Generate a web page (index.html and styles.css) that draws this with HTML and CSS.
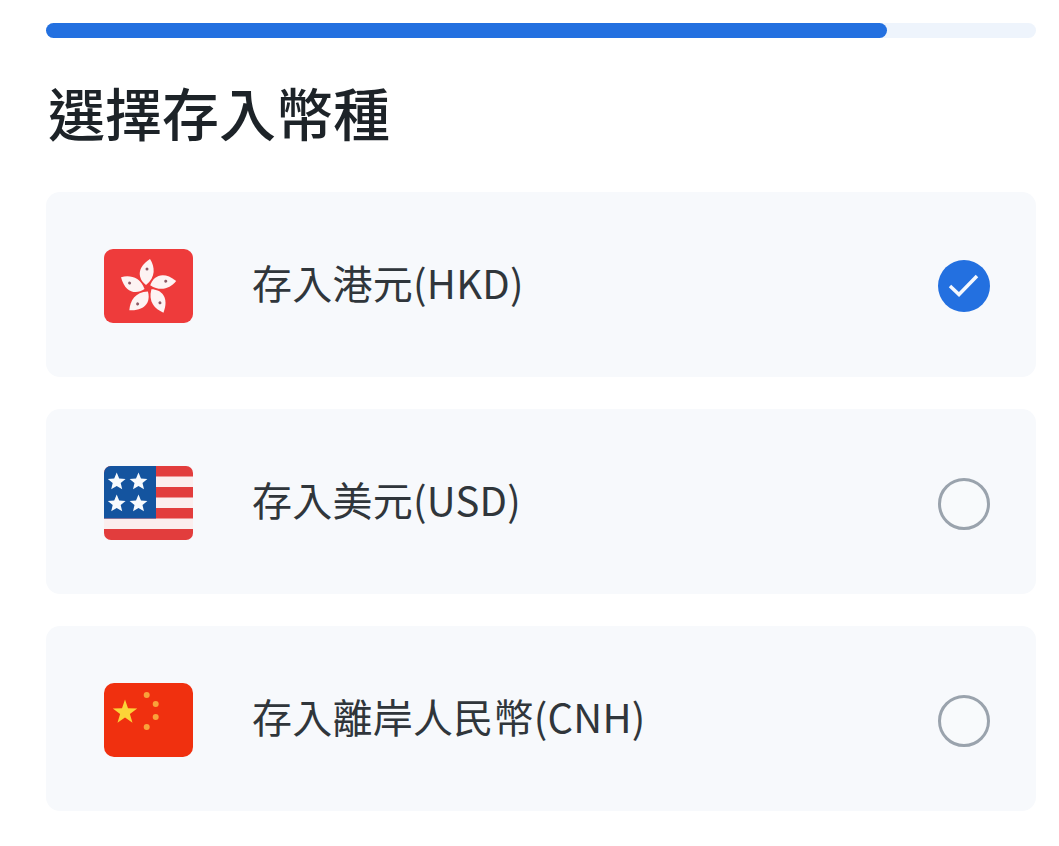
FILE: index.html
```html
<!DOCTYPE html>
<html lang="zh-Hant">
<head>
<meta charset="utf-8">
<title>選擇存入幣種</title>
<link rel="stylesheet" href="styles.css">
</head>
<body>
<main class="page">
  <div class="progress"><div class="progress-fill"></div></div>
  <h1 class="title">選擇存入幣種</h1>
  <div class="list">
    <div class="card">
      <svg class="flag" viewBox="0 0 89 74">
        <rect width="89" height="74" rx="9" fill="#ee3b3b"/>
        <g fill="#fdf3f3">
          <path d="M42 36C34 30 32 19 46 10C51 18 52 28 42 36Z"/>
          <path d="M42 36C34 30 32 19 46 10C51 18 52 28 42 36Z" transform="rotate(72 44 39)"/>
          <path d="M42 36C34 30 32 19 46 10C51 18 52 28 42 36Z" transform="rotate(144 44 39)"/>
          <path d="M42 36C34 30 32 19 46 10C51 18 52 28 42 36Z" transform="rotate(216 44 39)"/>
          <path d="M42 36C34 30 32 19 46 10C51 18 52 28 42 36Z" transform="rotate(288 44 39)"/>
        </g>
        <g fill="#8c5a66">
          <circle cx="43" cy="20" r="1.500"/>
          <circle cx="43" cy="20" r="1.500" transform="rotate(72 44 39)"/>
          <circle cx="43" cy="20" r="1.500" transform="rotate(144 44 39)"/>
          <circle cx="43" cy="20" r="1.500" transform="rotate(216 44 39)"/>
          <circle cx="43" cy="20" r="1.500" transform="rotate(288 44 39)"/>
        </g>
      </svg>
      <span class="label">存入港元(HKD)</span>
      <svg class="radio" viewBox="0 0 52 52">
        <circle cx="26" cy="26" r="26" fill="#2370e0"/>
        <path d="M12 26L21 34.500L39 16" fill="none" stroke="#f4f8fe" stroke-width="3.500"/>
      </svg>
    </div>
    <div class="card">
      <svg class="flag" viewBox="0 0 89 74">
        <defs>
          <clipPath id="flag-clip"><rect width="89" height="74" rx="7"/></clipPath>
        </defs>
        <g clip-path="url(#flag-clip)">
          <rect width="89" height="74" fill="#fbeeee"/>
          <rect y="0" width="89" height="10.500" fill="#e23d3d"/>
          <rect y="21" width="89" height="10.500" fill="#e23d3d"/>
          <rect y="42" width="89" height="10.500" fill="#e23d3d"/>
          <rect y="63" width="89" height="11" fill="#e23d3d"/>
          <rect width="52" height="52.500" fill="#14549f"/>
          <g fill="#f7fafd">
            <path d="M12.700 6.500l2.500 5.900 6.400.500-4.900 4.200 1.500 6.200-5.500-3.300-5.500 3.300 1.500-6.200-4.900-4.200 6.400-.500z"/>
            <path d="M34.500 6.500l2.500 5.900 6.400.500-4.900 4.200 1.500 6.200-5.500-3.300-5.500 3.300 1.500-6.200-4.900-4.200 6.400-.500z"/>
            <path d="M12.700 28.500l2.500 5.900 6.400.500-4.900 4.200 1.500 6.200-5.500-3.300-5.500 3.300 1.500-6.200-4.900-4.200 6.400-.500z"/>
            <path d="M34.500 28.500l2.500 5.900 6.400.500-4.900 4.200 1.500 6.200-5.500-3.300-5.500 3.300 1.500-6.200-4.900-4.200 6.400-.500z"/>
          </g>
        </g>
      </svg>
      <span class="label">存入美元(USD)</span>
      <span class="radio radio-empty"></span>
    </div>
    <div class="card">
      <svg class="flag" viewBox="0 0 89 74">
        <rect width="89" height="74" rx="10" fill="#f0300f"/>
        <path d="M21 16.500l3 8.700 9.200.200-7.300 5.600 2.600 8.800-7.500-5.200-7.500 5.200 2.600-8.800-7.300-5.600 9.200-.200z" fill="#fbd438"/>
        <g fill="#f9a23a">
          <circle cx="42.700" cy="12" r="3"/>
          <circle cx="51.700" cy="21" r="3"/>
          <circle cx="51.700" cy="34" r="3"/>
          <circle cx="42.700" cy="44" r="3"/>
        </g>
      </svg>
      <span class="label">存入離岸人民幣(CNH)</span>
      <span class="radio radio-empty"></span>
    </div>
  </div>
</main>
</body>
</html>
```

FILE: styles.css
```css
* {
  box-sizing: border-box;
}

html,
body {
  margin: 0;
  background: #ffffff;
}

.page {
  width: 1059px;
  height: 846px;
  padding: 23px 23px 0 46px;
  overflow: hidden;
  font-family: "Noto Sans CJK TC", "Noto Sans", sans-serif;
}

.progress {
  height: 15px;
  border-radius: 8px;
  background: #eef4fc;
}

.progress-fill {
  width: 841px;
  height: 100%;
  border-radius: 8px;
  background: #2370e0;
}

.title {
  margin: 37px 0 45px;
  padding-left: 2px;
  height: 72px;
  font-size: 57px;
  line-height: 72px;
  font-weight: 500;
  color: #1d2328;
}

.list {
  display: flex;
  flex-direction: column;
  gap: 32px;
}

.card {
  display: flex;
  align-items: center;
  height: 185px;
  padding: 2px 46px 0 58px;
  border-radius: 14px;
  background: #f7f9fc;
}

.flag {
  flex: none;
  width: 89px;
  height: 74px;
}

.label {
  flex: 1;
  margin-left: 59px;
  padding-bottom: 8px;
  font-size: 40px;
  line-height: 50px;
  letter-spacing: 0.25px;
  color: #30363b;
}

.radio {
  flex: none;
  width: 52px;
  height: 52px;
}

.radio-empty {
  margin-top: 2px;
  border: 3px solid #9aa3ad;
  border-radius: 50%;
  background: #f8fafc;
}
```
